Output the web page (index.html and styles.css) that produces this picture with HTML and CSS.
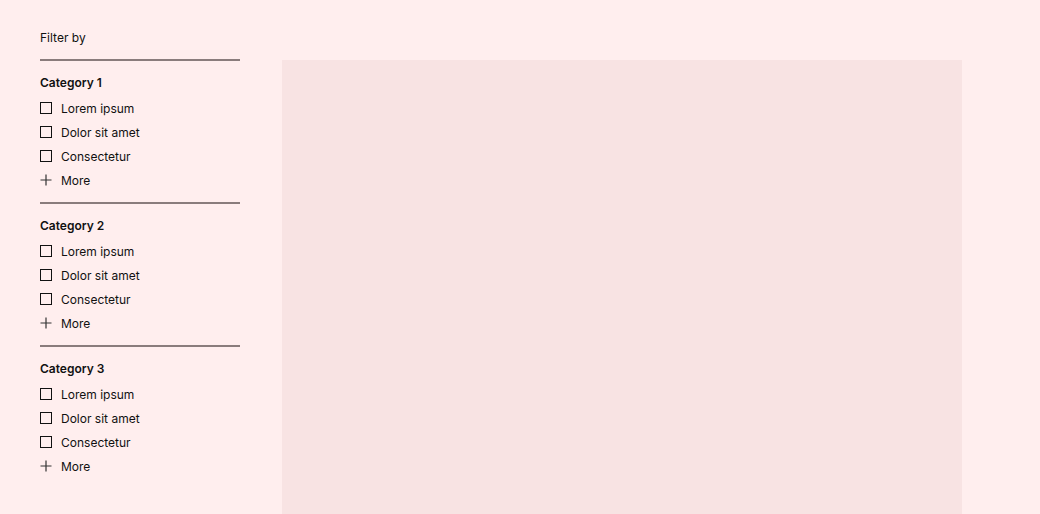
FILE: index.html
```html
<!DOCTYPE html>
<html>
<head>
<meta charset="utf-8">
<link rel="stylesheet" href="styles.css">
</head>
<body>
<div class="page">
  <aside class="sidebar">
    <div class="filter-title">Filter by</div>
    <section class="group">
      <div class="group-title">Category 1</div>
      <div class="opt"><span class="box"></span>Lorem ipsum</div>
      <div class="opt"><span class="box"></span>Dolor sit amet</div>
      <div class="opt"><span class="box"></span>Consectetur</div>
      <div class="opt"><svg class="plus" viewBox="0 0 12 12"><path d="M6 0.5V11.5M0.5 6H11.5" stroke="#333" stroke-width="1.2" fill="none"/></svg>More</div>
    </section>
    <section class="group">
      <div class="group-title">Category 2</div>
      <div class="opt"><span class="box"></span>Lorem ipsum</div>
      <div class="opt"><span class="box"></span>Dolor sit amet</div>
      <div class="opt"><span class="box"></span>Consectetur</div>
      <div class="opt"><svg class="plus" viewBox="0 0 12 12"><path d="M6 0.5V11.5M0.5 6H11.5" stroke="#333" stroke-width="1.2" fill="none"/></svg>More</div>
    </section>
    <section class="group">
      <div class="group-title">Category 3</div>
      <div class="opt"><span class="box"></span>Lorem ipsum</div>
      <div class="opt"><span class="box"></span>Dolor sit amet</div>
      <div class="opt"><span class="box"></span>Consectetur</div>
      <div class="opt"><svg class="plus" viewBox="0 0 12 12"><path d="M6 0.5V11.5M0.5 6H11.5" stroke="#333" stroke-width="1.2" fill="none"/></svg>More</div>
    </section>
  </aside>
  <main class="content"></main>
</div>
</body>
</html>
```
FILE: styles.css
```css
html, body {
  margin: 0;
  padding: 0;
  background: #ffeeee;
  overflow: hidden;
}
body {
  font-family: Inter, "Liberation Sans", sans-serif;
  font-size: 12px;
  color: #111;
}
.page {
  display: flex;
  padding: 28px 0 0 40px;
  height: 514px;
  box-sizing: border-box;
}
.sidebar {
  width: 200px;
  flex: none;
}
.filter-title {
  line-height: 20px;
  margin-bottom: 11px;
}
.group {
  border-top: 2px solid #8a7c7c;
  padding-top: 12px;
  padding-bottom: 10px;
}
.group-title {
  font-weight: 600;
  line-height: 20px;
  margin-bottom: 3px;
}
.opt {
  display: flex;
  align-items: center;
  height: 24px;
  gap: 9px;
}
.box {
  width: 12px;
  height: 12px;
  border: 1px solid #111;
  box-sizing: border-box;
  flex: none;
}
.plus {
  width: 12px;
  height: 12px;
  flex: none;
}
.content {
  margin-left: 42px;
  margin-top: 32px;
  width: 680px;
  height: 454px;
  background: #f8e3e3;
  flex: none;
}
```
